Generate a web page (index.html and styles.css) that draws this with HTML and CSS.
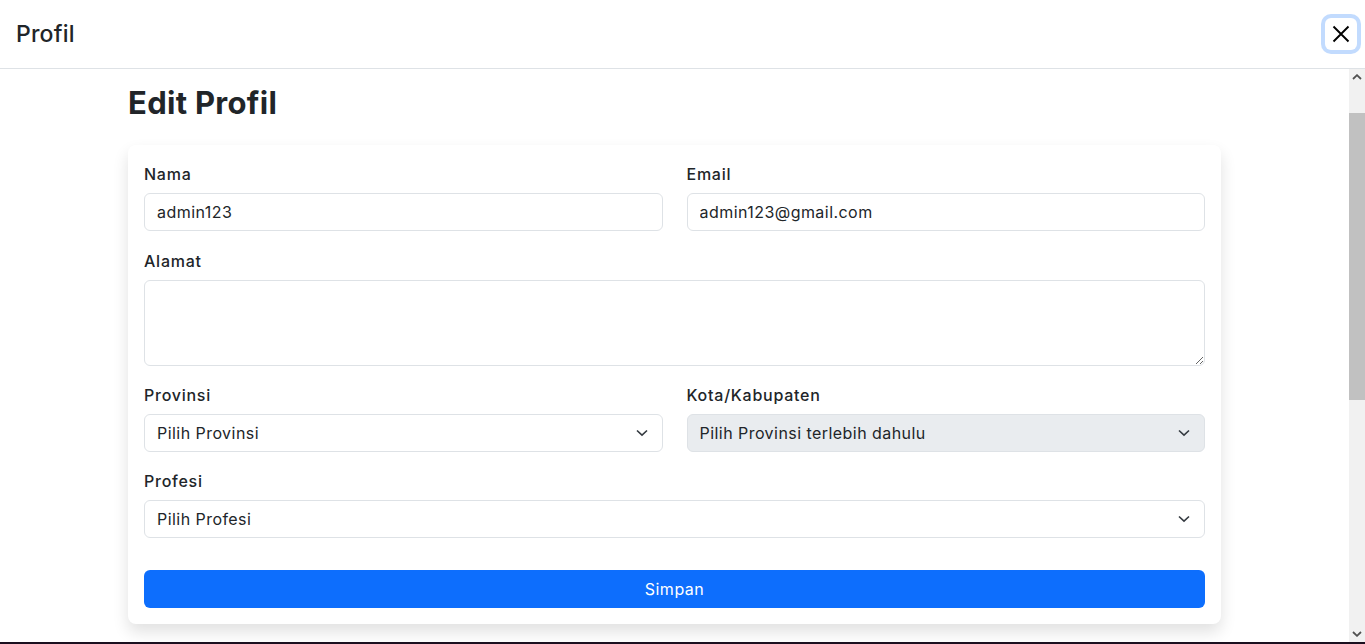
FILE: index.html
```html
<!DOCTYPE html>
<html lang="id">
<head>
<meta charset="utf-8">
<title>Profil</title>
<link rel="stylesheet" href="styles.css">
</head>
<body>
<div class="modal">
  <header class="modal-header">
    <h4 class="modal-title">Profil</h4>
    <button class="btn-close" type="button" aria-label="Close">
      <svg width="18" height="18" viewBox="0 0 18 18"><path d="M1.5 1.5 L16.5 16.5 M16.5 1.5 L1.5 16.5" stroke="#000" stroke-width="1.9" fill="none"/></svg>
    </button>
  </header>
  <div class="modal-body">
    <main class="content">
      <div class="page">
        <h2 class="page-title">Edit Profil</h2>
        <form class="card">
          <div class="row row-first">
            <div class="field">
              <label class="form-label">Nama</label>
              <input class="form-control" type="text" value="admin123">
            </div>
            <div class="field">
              <label class="form-label">Email</label>
              <input class="form-control" type="email" value="admin123@gmail.com">
            </div>
          </div>
          <div class="field">
            <label class="form-label">Alamat</label>
            <textarea class="form-control textarea" rows="3"></textarea>
          </div>
          <div class="row">
            <div class="field">
              <label class="form-label">Provinsi</label>
              <div class="select-wrap">
                <select class="form-select"><option>Pilih Provinsi</option></select>
                <svg class="chev" width="12" height="8" viewBox="0 0 12 8"><path d="M1 1.5 L6 6.2 L11 1.5" stroke="#343a40" stroke-width="1.6" fill="none"/></svg>
              </div>
            </div>
            <div class="field">
              <label class="form-label">Kota/Kabupaten</label>
              <div class="select-wrap">
                <select class="form-select" disabled><option>Pilih Provinsi terlebih dahulu</option></select>
                <svg class="chev" width="12" height="8" viewBox="0 0 12 8"><path d="M1 1.5 L6 6.2 L11 1.5" stroke="#343a40" stroke-width="1.6" fill="none"/></svg>
              </div>
            </div>
          </div>
          <div class="field">
            <label class="form-label">Profesi</label>
            <div class="select-wrap">
              <select class="form-select"><option>Pilih Profesi</option></select>
              <svg class="chev" width="12" height="8" viewBox="0 0 12 8"><path d="M1 1.5 L6 6.2 L11 1.5" stroke="#343a40" stroke-width="1.6" fill="none"/></svg>
            </div>
          </div>
          <button class="btn-primary" type="button">Simpan</button>
        </form>
      </div>
    </main>
    <div class="scrollbar" aria-hidden="true">
      <div class="sb-btn">
        <svg width="10" height="6" viewBox="0 0 10 6"><path d="M1 5 L5 1.2 L9 5" stroke="#505050" stroke-width="1.8" fill="none"/></svg>
      </div>
      <div class="sb-track">
        <div class="sb-thumb"></div>
      </div>
      <div class="sb-btn">
        <svg width="10" height="6" viewBox="0 0 10 6"><path d="M1 1 L5 4.8 L9 1" stroke="#505050" stroke-width="1.8" fill="none"/></svg>
      </div>
    </div>
  </div>
</div>
<div class="screen-edge"></div>
</body>
</html>
```
FILE: styles.css
```css
* { box-sizing: border-box; }

html, body {
  margin: 0;
  padding: 0;
  height: 644px;
  overflow: hidden;
  background: #fff;
}

body {
  font-family: Inter, "Noto Sans", sans-serif;
  color: #212529;
  font-size: 16px;
  line-height: 1.5;
  display: flex;
  flex-direction: column;
}

.modal {
  height: 642px;
  display: flex;
  flex-direction: column;
}

.screen-edge {
  height: 2px;
  background: #1b0f1f;
}

.modal-header {
  height: 69px;
  flex: none;
  display: flex;
  align-items: center;
  justify-content: space-between;
  padding: 0 16px;
  border-bottom: 1px solid #dee2e6;
}

.modal-title {
  margin: 0;
  padding-top: 2px;
  font-size: 23px;
  font-weight: 500;
  line-height: 1.2;
  letter-spacing: 0.2px;
}

.btn-close {
  width: 32px;
  height: 32px;
  margin-right: -8px;
  padding: 0;
  border: 0;
  border-radius: 6px;
  background: transparent;
  box-shadow: 0 0 0 4px rgba(13, 110, 253, 0.25);
  display: flex;
  align-items: center;
  justify-content: center;
}

.modal-body {
  flex: 1;
  display: flex;
  min-height: 0;
}

.content {
  flex: 1;
  overflow: hidden;
}

.page {
  width: 1093px;
  margin: 0 auto;
}

.page-title {
  margin: 15px 0 24px;
  font-size: 31px;
  font-weight: 700;
  line-height: 1.2;
  letter-spacing: 0.3px;
}

.card {
  background: #fff;
  border-radius: 8px;
  padding: 16px;
  box-shadow: 0 8px 16px rgba(0, 0, 0, 0.12);
}

.row {
  display: grid;
  grid-template-columns: 1fr 1fr;
  column-gap: 24px;
}

.field {
  margin-bottom: 16px;
}

.row-first .field {
  margin-bottom: 17px;
}

.form-label {
  display: block;
  margin-bottom: 7px;
  padding-top: 1px;
  font-size: 16px;
  font-weight: 500;
  line-height: 24px;
  letter-spacing: 0.75px;
}

.form-control,
.form-select {
  display: block;
  width: 100%;
  height: 38px;
  padding: 6px 12px;
  font-family: inherit;
  font-size: 16px;
  line-height: 24px;
  color: #212529;
  background: #fff;
  border: 1px solid #dee2e6;
  border-radius: 6px;
  letter-spacing: 0.45px;
  outline: none;
}

.textarea {
  height: 86px;
  resize: vertical;
}

.select-wrap {
  position: relative;
}

.form-select {
  appearance: none;
  -webkit-appearance: none;
  padding-right: 36px;
}

.form-select:disabled {
  background: #e9ecef;
  color: #212529;
  opacity: 1;
}

.chev {
  position: absolute;
  right: 15px;
  top: 15px;
  pointer-events: none;
}

.btn-primary {
  display: block;
  width: 100%;
  height: 38px;
  margin-top: 32px;
  padding: 6px 12px;
  border: 0;
  border-radius: 6px;
  background: #0d6efd;
  color: #fff;
  font-family: inherit;
  font-size: 16px;
  line-height: 24px;
  letter-spacing: 0.5px;
}

.scrollbar {
  width: 16px;
  flex: none;
  display: flex;
  flex-direction: column;
  background: #f1f1f1;
}

.sb-btn {
  height: 16px;
  display: flex;
  align-items: center;
  justify-content: center;
}

.sb-track {
  flex: 1;
  padding-top: 28px;
}

.sb-thumb {
  height: 287px;
  background: #c1c1c1;
}
```
